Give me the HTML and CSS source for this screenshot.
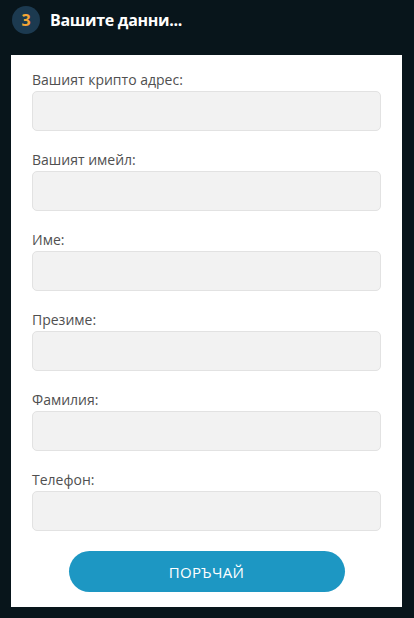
FILE: index.html
```html
<!DOCTYPE html>
<html lang="bg">
<head>
<meta charset="utf-8">
<link rel="stylesheet" href="styles.css">
</head>
<body>
<div class="header">
  <span class="step">3</span>
  <span class="title">Вашите данни...</span>
</div>
<form class="panel">
  <label class="field"><span class="label">Вашият крипто адрес:</span><input class="input" type="text"></label>
  <label class="field"><span class="label">Вашият имейл:</span><input class="input" type="text"></label>
  <label class="field"><span class="label">Име:</span><input class="input" type="text"></label>
  <label class="field"><span class="label">Презиме:</span><input class="input" type="text"></label>
  <label class="field"><span class="label">Фамилия:</span><input class="input" type="text"></label>
  <label class="field"><span class="label">Телефон:</span><input class="input" type="text"></label>
  <div class="actions"><button class="btn" type="button">ПОРЪЧАЙ</button></div>
</form>
</body>
</html>
```

FILE: styles.css
```css
html, body {
  margin: 0;
  padding: 0;
  background: #08151b;
  font-family: "Open Sans", "Noto Sans", sans-serif;
}
.header {
  display: flex;
  align-items: center;
  gap: 10px;
  height: 40px;
  padding: 0 0 0 12px;
  margin-bottom: 15px;
}
.step {
  width: 28px;
  height: 28px;
  border-radius: 50%;
  background: #1c3a50;
  color: #f3a536;
  font-weight: 700;
  font-size: 16px;
  display: flex;
  align-items: center;
  justify-content: center;
}
.title {
  color: #ffffff;
  font-weight: 700;
  font-size: 16px;
  letter-spacing: -0.3px;
}
.panel {
  background: #ffffff;
  margin: 0 12px 0 11px;
  padding: 16px 21px 15px;
  display: flex;
  flex-direction: column;
  gap: 20px;
}
.field {
  display: flex;
  flex-direction: column;
  gap: 2px;
}
.label {
  font-size: 14px;
  line-height: 18px;
  color: #505050;
}
.input {
  height: 40px;
  box-sizing: border-box;
  background: #f2f2f2;
  border: 1px solid #e2e2e2;
  border-radius: 5px;
  margin: 0;
}
.actions {
  display: flex;
  justify-content: center;
}
.btn {
  width: 276px;
  height: 41px;
  border: none;
  border-radius: 21px;
  background: #1d97c3;
  color: #ffffff;
  font-family: "Open Sans", "Noto Sans", sans-serif;
  font-weight: 500;
  font-size: 15px;
  letter-spacing: 0.3px;
}
```
